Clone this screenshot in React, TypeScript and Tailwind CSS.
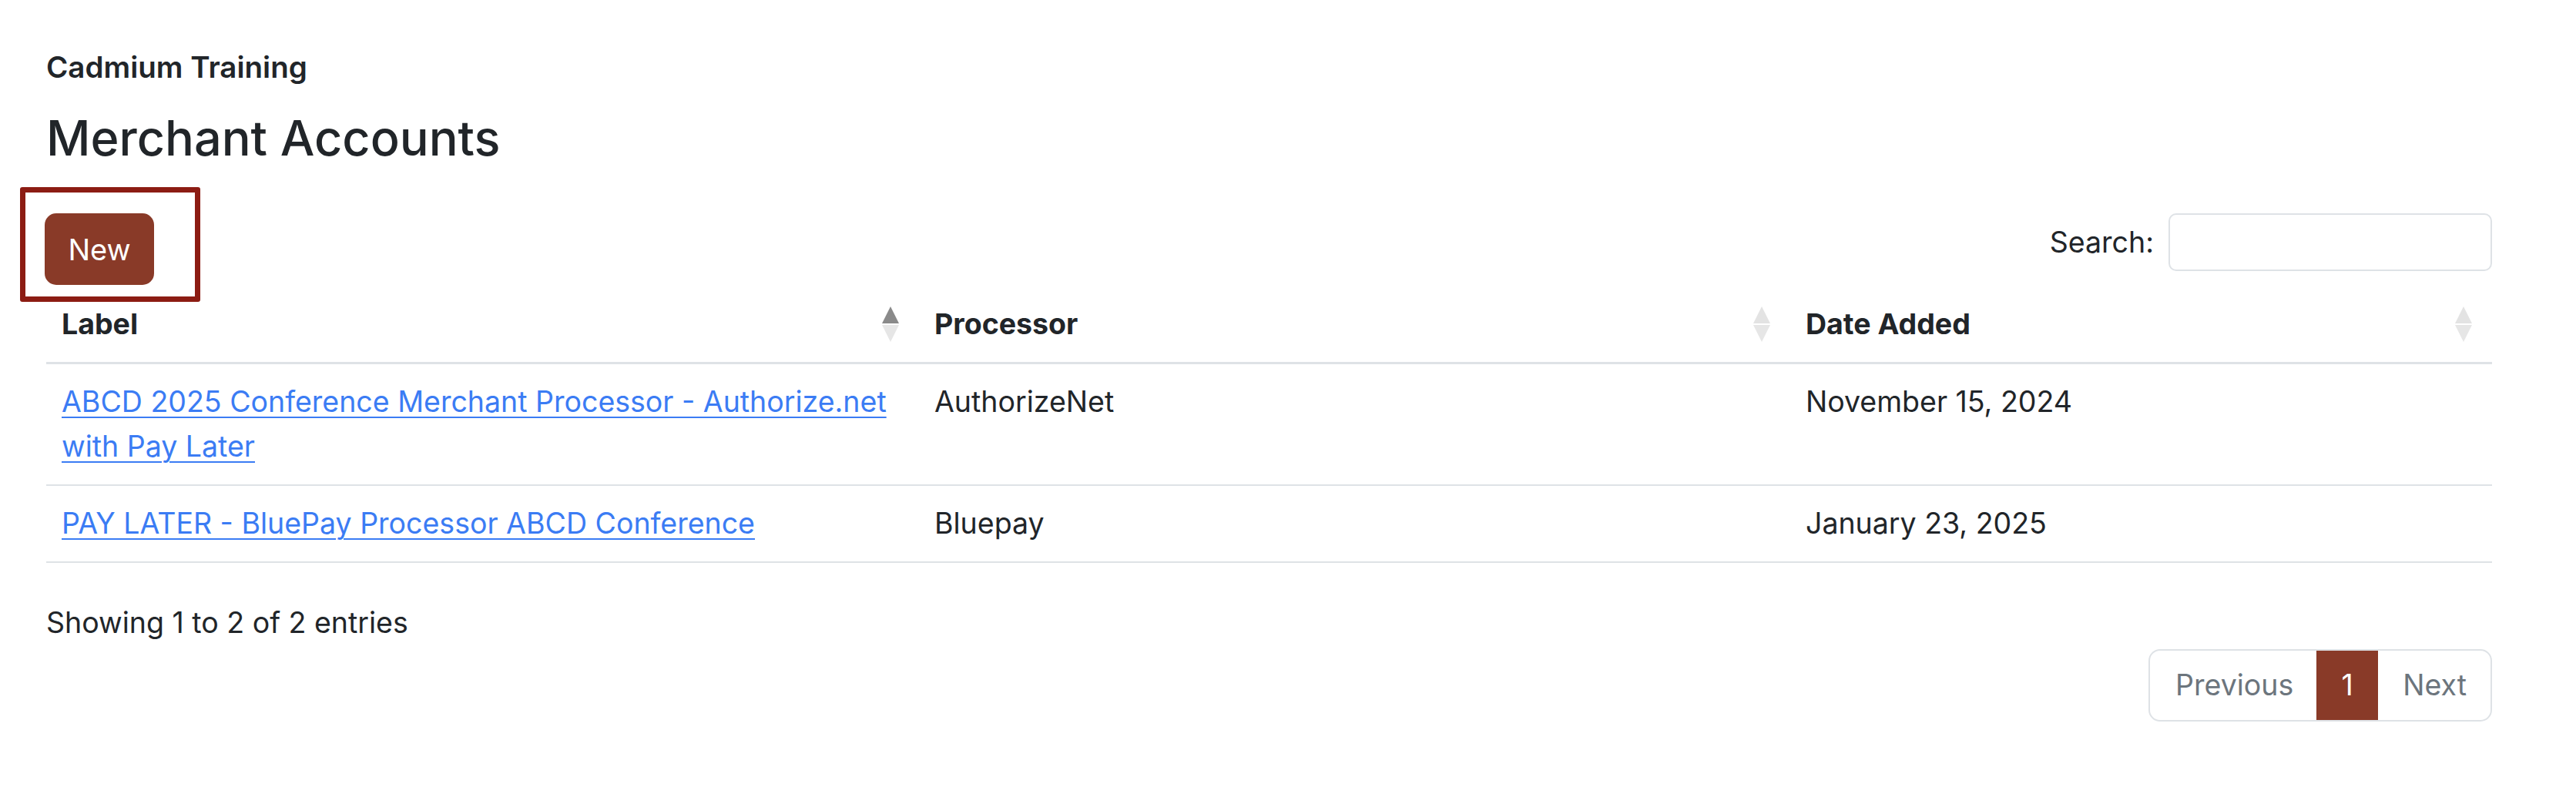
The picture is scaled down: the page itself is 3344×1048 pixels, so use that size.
import React from "react";

function SortIcon({ active }: { active?: boolean }) {
  return (
    <svg width="22" height="46" viewBox="0 0 22 46" className="shrink-0">
      <polygon points="11,0 22,22 0,22" fill={active ? "#8a8a8a" : "#e3e3e3"} />
      <polygon points="0,24 22,24 11,46" fill="#e6e6e6" />
    </svg>
  );
}

export default function App() {
  return (
    <div
      className="w-[3344px] h-[1048px] bg-white text-[#212529] pl-[60px] pr-[109px] pt-[64px]"
      style={{ fontFamily: 'Inter, "Liberation Sans", Arial, sans-serif' }}
    >
      <div className="text-[38.5px] leading-[46px] font-semibold">Cadmium Training</div>
      <h3 className="mt-[30px] text-[63px] leading-[79px] font-medium">Merchant Accounts</h3>

      <div className="mt-[58px] flex items-start justify-between">
        <div className="relative">
          <div className="absolute left-[-34px] top-[-34px] w-[234px] h-[149px] border-[7px] border-[#8c1c13] rounded-[3px]" />
          <button className="ml-[-2px] h-[93px] w-[142px] rounded-[15px] bg-[#893a28] text-white text-[38px] leading-[58px]">
            New
          </button>
        </div>
        <div className="flex items-center gap-[19px]">
          <span className="text-[37.5px] leading-[58px]">Search:</span>
          <input className="w-[420px] h-[75px] border-[2px] border-[#dee2e6] rounded-[10px] bg-white" />
        </div>
      </div>

      <table className="mt-[2px] w-[3175px] table-fixed border-collapse text-[37.5px] leading-[58px]">
        <colgroup>
          <col className="w-[1133px]" />
          <col className="w-[1131px]" />
          <col className="w-[911px]" />
        </colgroup>
        <thead>
          <tr className="border-b-[3px] border-[#dee2e6]">
            <th className="px-[20px] py-[20px] text-left font-bold">
              <div className="flex items-center justify-between pr-[6px]">
                <span>Label</span>
                <SortIcon active />
              </div>
            </th>
            <th className="px-[20px] py-[20px] text-left font-bold">
              <div className="flex items-center justify-between pr-[6px]">
                <span>Processor</span>
                <SortIcon />
              </div>
            </th>
            <th className="px-[20px] py-[20px] text-left font-bold">
              <div className="flex items-center justify-between pr-[6px]">
                <span>Date Added</span>
                <SortIcon />
              </div>
            </th>
          </tr>
        </thead>
        <tbody>
          <tr className="border-b-[2px] border-[#dee2e6] align-top">
            <td className="px-[20px] py-[20px]">
              <a href="#" className="text-[#3b7cf4] underline decoration-[2px] underline-offset-[6px]">
                ABCD 2025 Conference Merchant Processor - Authorize.net with Pay Later
              </a>
            </td>
            <td className="px-[20px] py-[20px]">AuthorizeNet</td>
            <td className="px-[20px] py-[20px]">November 15, 2024</td>
          </tr>
          <tr className="border-b-[2px] border-[#dee2e6] align-top">
            <td className="px-[20px] py-[20px]">
              <a href="#" className="text-[#3b7cf4] underline decoration-[2px] underline-offset-[6px]">
                PAY LATER - BluePay Processor ABCD Conference
              </a>
            </td>
            <td className="px-[20px] py-[20px]">Bluepay</td>
            <td className="px-[20px] py-[20px]">January 23, 2025</td>
          </tr>
        </tbody>
      </table>

      <div className="mt-[49px] text-[37.5px] leading-[58px]">Showing 1 to 2 of 2 entries</div>

      <div className="mt-[5px] w-[3175px] flex justify-end">
        <div className="flex h-[94px] border-[2px] border-[#dee2e6] rounded-[15px] overflow-hidden text-[37.5px] leading-[58px]">
          <div className="pl-[33px] pr-[30px] flex items-center text-[#6c757d]">Previous</div>
          <div className="w-[80px] flex items-center justify-center bg-[#893a28] text-white my-[-2px]">1</div>
          <div className="pl-[32px] pr-[31px] flex items-center text-[#6c757d]">Next</div>
        </div>
      </div>
    </div>
  );
}
